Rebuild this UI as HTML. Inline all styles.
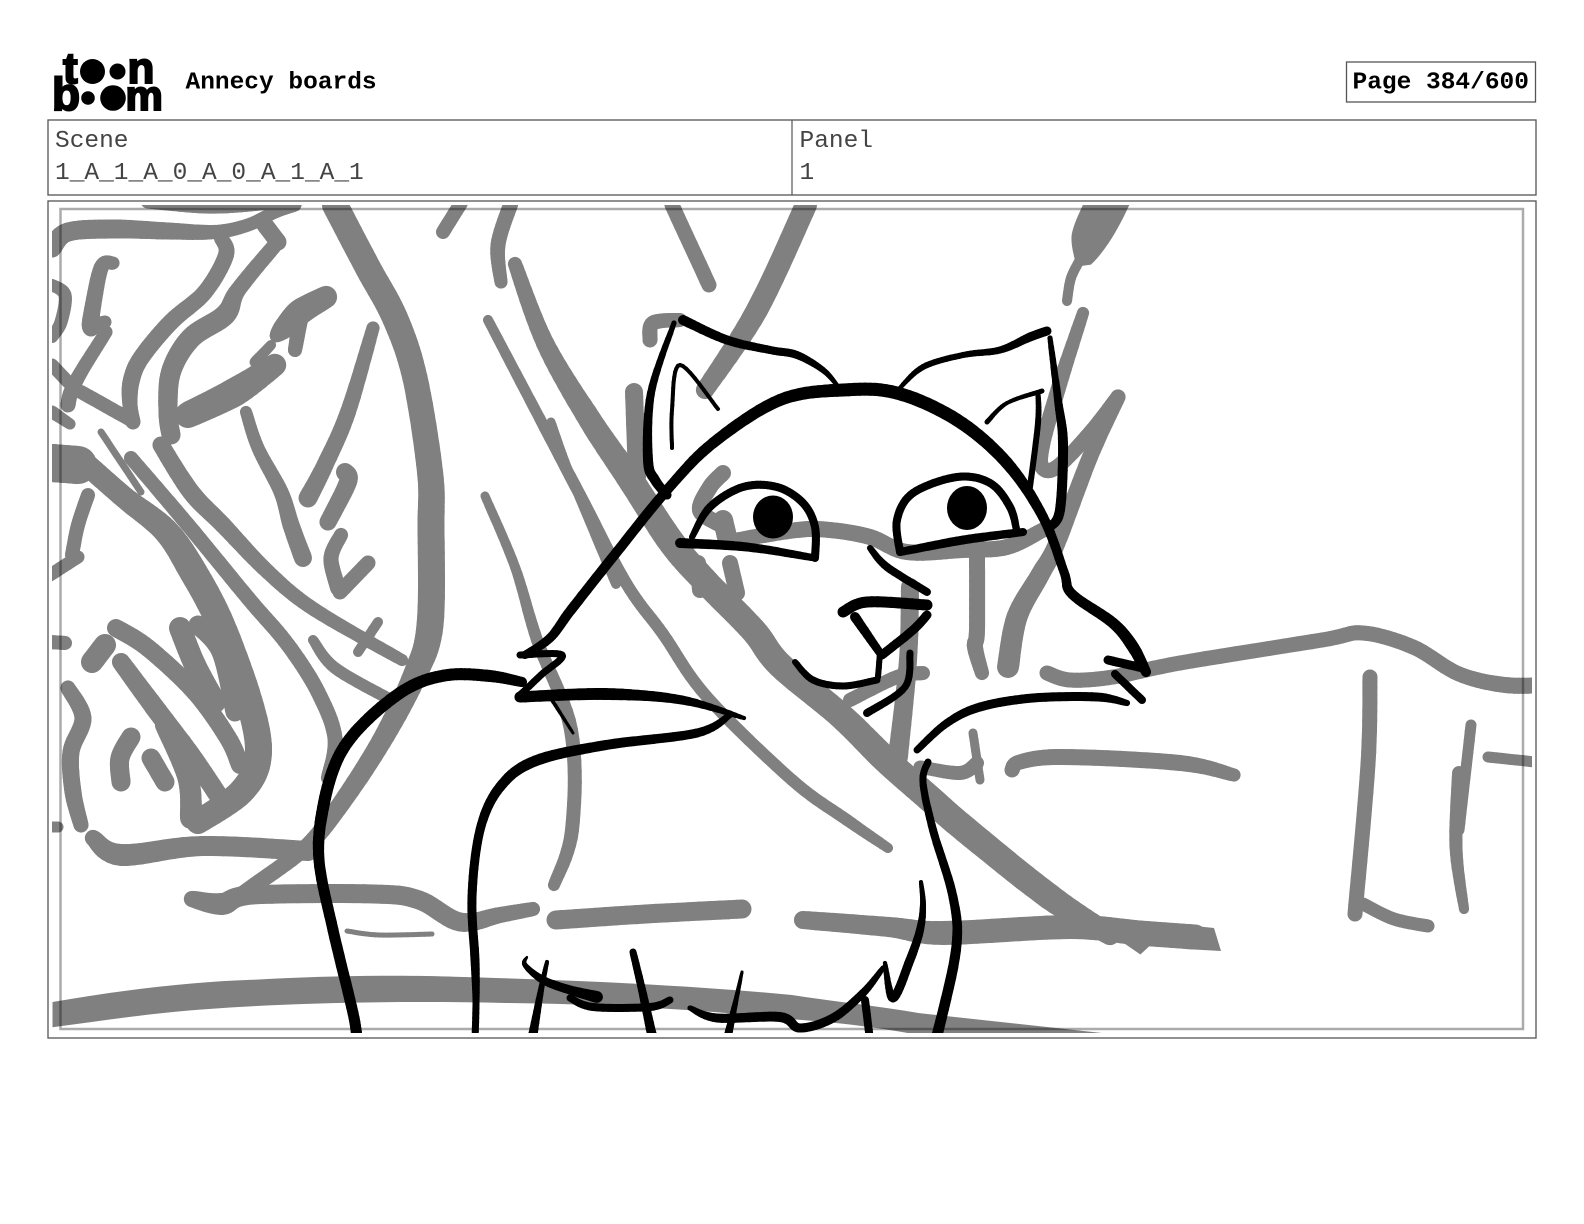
<!DOCTYPE html>
<html><head><meta charset="utf-8"><title>Annecy boards</title>
<style>
html,body{margin:0;padding:0;background:#fff;width:1584px;height:1224px;overflow:hidden}
svg{position:absolute;left:0;top:0;display:block}
text{font-family:"Liberation Mono",monospace;font-size:24.5px;fill:#444}
.b{font-weight:bold;fill:#000}
.l{font-family:"Liberation Sans",sans-serif;font-weight:bold;fill:#000;stroke:#000;stroke-width:2}
</style></head><body>
<svg id="s" width="1584" height="1224" viewBox="0 0 1584 1224" xmlns="http://www.w3.org/2000/svg">
<defs><clipPath id="c"><rect x="52" y="205" width="1480" height="828"/></clipPath></defs>
<rect width="1584" height="1224" fill="#fff"/>
<g>
<text class="l" x="63" y="83" style="font-size:44px">t</text>
<circle cx="92.500" cy="71.500" r="12.500"/><circle cx="117.500" cy="71.500" r="8"/>
<text class="l" x="127.500" y="83" style="font-size:44px">n</text>
<text class="l" x="52" y="110" style="font-size:46px">b</text>
<circle cx="88" cy="98" r="6.800"/><circle cx="113" cy="98" r="12.800"/>
<text class="l" x="125.500" y="110" style="font-size:42px">m</text>
</g>
<text class="b" x="185.500" y="88.500">Annecy boards</text>
<rect x="1346.500" y="62" width="189" height="40" fill="none" stroke="#555" stroke-width="1.300"/>
<text class="b" x="1352.500" y="88.500">Page 384/600</text>
<rect x="48" y="120" width="1488" height="75" fill="none" stroke="#555" stroke-width="1.300"/>
<line x1="792" y1="120" x2="792" y2="195" stroke="#555" stroke-width="1.200"/>
<text x="55" y="147">Scene</text>
<text x="55" y="179">1_A_1_A_0_A_0_A_1_A_1</text>
<text x="799.500" y="147">Panel</text>
<text x="799.500" y="179">1</text>
<rect x="48" y="201" width="1488" height="837" fill="none" stroke="#555" stroke-width="1.300"/>
<g clip-path="url(#c)"><g id="art">
<path fill="#808080" d="M1185 925L1214 928L1221 951L1185 949Z"/>
<g transform="scale(1.0101)">
<path fill="#808080" d="M52 992C120 980 190 972 250 970C320 966 400 965 450 967C560 970 680 975 784 985C830 992 870 996 910 1003L1140 1028L925 1028C880 1018 830 1012 784 1009C700 1000 600 994 500 993C380 990 250 994 170 1002C130 1006 90 1012 52 1017Z"/>
<path fill="#808080" d="M1072 203L1118 203C1108 225 1095 248 1080 262L1066 264C1062 250 1060 240 1061 232C1063 222 1068 212 1072 203Z"/>
<path fill="#808080" d="M1100 925L1129 945L1145 930Z"/>
</g>
</g></g>
<rect x="60.500" y="209" width="1462.500" height="820" fill="none" stroke="#000" stroke-opacity=".33" stroke-width="2.500"/>
</svg>
<script>
/* each stroke: list of [x,y,width] in page pixels */
var gray=[
[[148,201,15],[205,206,15],[250,204,15],[300,198,15]],
[[52,248,19],[68,232,19],[115,229,19],[168,231,17],[215,232,14],[248,225,13],[275,212,13],[295,205,13]],
[[221,238,14],[226,255,16],[205,292,16],[171,322,17],[141,358,17],[131,382,17],[130,405,15],[133,422,15]],
[[265,225,17],[278,242,17]],
[[275,245,15],[238,290,16],[225,315,21],[191,338,21],[171,372,20],[168,412,19],[171,435,19]],
[[113,263,13],[101,268,15],[91,318,17],[91,328,17]],
[[105,322,13],[92,325,13]],
[[106,332,13],[81,372,14],[71,392,15],[68,405,15]],
[[81,392,14],[131,420,14]],
[[52,285,12],[65,295,13],[61,322,13],[52,337,12]],
[[52,365,13],[68,382,13]],
[[52,412,13],[70,424,11]],
[[326,297,22],[300,312,26],[284,328,21],[276,336,12]],
[[300,320,16],[295,350,14]],
[[275,365,22],[235,392,29],[188,415,26]],
[[271,345,10],[255,362,11]],
[[246,412,12],[258,448,13],[281,492,15],[291,525,17],[303,558,18]],
[[335,205,26],[368,268,26],[395,318,26],[415,378,25],[430,472,26],[431,525,27],[430,625,27],[415,675,24],[381,742,20],[338,808,18],[306,847,16],[255,885,16],[234,900,16]],
[[373,328,13],[348,412,16],[325,465,17],[308,498,19]],
[[345,472,18],[348,482,18],[328,522,17]],
[[341,535,14],[331,558,15],[338,588,16]],
[[368,563,15],[340,592,15]],
[[161,445,17],[191,492,18],[223,525,17],[268,572,15],[315,610,14],[402,660,12]],
[[378,622,10],[358,652,10]],
[[101,432,7],[141,492,7]],
[[131,458,14],[188,525,15],[248,598,15],[288,645,15],[318,692,15],[335,738,15],[328,778,14]],
[[52,463,38],[78,465,38]],
[[85,463,22],[125,498,22],[165,530,25],[191,568,28],[221,625,28],[251,708,27],[258,758,27],[241,792,26],[198,822,24]],
[[116,628,18],[148,648,18],[195,692,18],[228,738,18],[240,765,18]],
[[121,662,18],[158,712,20],[191,755,19],[218,795,19]],
[[105,645,22],[92,662,22]],
[[180,628,22],[195,665,22],[215,702,22]],
[[198,625,19],[221,652,19],[235,712,19]],
[[165,725,20],[188,778,21],[191,818,22]],
[[131,737,19],[120,758,19],[121,782,19]],
[[151,758,19],[165,782,19]],
[[68,688,15],[83,718,17],[71,752,17],[73,792,17],[81,825,15]],
[[50,642,14],[65,643,14]],
[[50,827,11],[58,827,11]],
[[313,640,10],[335,668,12],[391,700,12]],
[[88,495,14],[78,525,14],[72,555,14]],
[[78,557,13],[50,575,13]],
[[93,838,16],[121,855,22],[202,846,20],[308,851,20]],
[[192,899,16],[222,904,22],[252,895,19],[374,894,19],[419,900,19],[460,922,19],[500,915,16],[533,909,14]],
[[347,931,5],[379,935,5],[432,934,5]],
[[556,920,19],[646,914,19],[742,909,19]],
[[485,496,9],[515,567,10],[537,640,12],[571,730,14],[572,830,14],[554,885,12]],
[[551,422,9],[571,477,9],[616,584,10]],
[[672,205,15],[709,285,15]],
[[511,203,15],[498,245,15],[501,282,13]],
[[461,203,14],[443,232,14]],
[[488,320,10],[530,400,11],[580,495,12],[626,583,12],[663,634,12],[707,697,12],[792,780,12],[847,820,12],[888,848,10]],
[[515,264,14],[545,343,18],[590,420,23],[632,482,26],[672,543,27],[707,583,26],[753,630,26],[780,665,26],[840,715,26],[885,759,27],[928,797,27],[966,830,27],[1050,897,26],[1110,935,20]],
[[634,392,18],[637,477,18]],
[[650,340,15],[653,323,15],[680,320,14]],
[[806,205,22],[757,310,22],[705,390,18]],
[[723,473,16],[710,487,16],[700,510,16],[717,523,16]],
[[723,520,20],[727,537,20]],
[[730,563,16],[737,593,16]],
[[700,590,16],[698,563,16]],
[[737,540,15],[797,530,16],[830,530,16],[870,537,16],[907,552,16],[963,550,16],[1007,547,16],[1043,530,15]],
[[977,553,16],[977,630,16],[975,647,16],[982,673,14]],
[[910,587,18],[908,660,18],[898,757,20]],
[[1083,313,12],[1060,383,15],[1043,443,15],[1042,467,15],[1057,467,15],[1090,433,15],[1118,397,15]],
[[1118,397,15],[1090,457,16],[1057,543,17],[1040,575,19],[1017,617,21],[1008,667,22]],
[[1081,258,10],[1071,278,10],[1067,301,10]],
[[923,673,14],[897,677,14],[850,700,14]],
[[1047,673,15],[1070,680,15],[1113,677,15],[1180,663,15],[1322,640,15],[1363,633,15],[1413,647,15],[1459,674,15],[1505,685,16],[1545,685,16]],
[[973,733,9],[980,780,9]],
[[920,767,13],[960,773,14],[977,763,14]],
[[1012,770,15],[1020,762,15],[1063,757,16],[1180,763,16],[1234,775,13]],
[[803,920,18],[889,927,20],[943,933,24],[1070,927,24],[1140,933,25],[1195,937,25]],
[[1370,677,15],[1368,764,15],[1355,914,15]],
[[1363,904,13],[1394,919,13],[1428,926,13]],
[[1471,725,11],[1459,830,11]],
[[1459,773,14],[1456,847,13],[1464,909,10]],
[[1488,757,11],[1545,763,11]]
];
var black=[
[[525,655,8],[550,638,9],[571,610,10],[616,553,10],[667,490,10],[713,443,11],[780,400,12],[843,390,13],[897,393,13],[957,420,13],[1007,463,12],[1043,517,10],[1064,572,9],[1072,594,10],[1113,623,11],[1133,647,12],[1146,672,10]],
[[520,655,7],[562,655,7],[541,675,7],[520,695,7]],
[[520,697,11],[606,694,12],[682,700,9],[744,718,4]],
[[730,715,6],[697,733,9],[606,745,10],[535,761,11],[500,787,10],[480,830,9],[472,897,9],[475,960,9],[476,1000,7],[475,1040,7]],
[[552,700,4],[573,733,3]],
[[683,320,10],[727,340,9],[770,350,8],[797,355,8],[823,370,6],[837,385,4]],
[[674,323,5],[651,393,8],[648,460,10],[655,480,10],[667,495,9]],
[[672,448,4],[672,410,4],[680,365,4],[718,409,4]],
[[1108,660,9],[1143,668,9]],
[[1115,674,8],[1142,700,8]],
[[917,750,7],[947,723,8],[980,707,9],[1033,698,9],[1097,697,9],[1127,703,6]],
[[843,612,11],[867,602,11],[927,605,11]],
[[927,615,9],[913,630,9],[882,655,9]],
[[855,617,10],[880,653,8]],
[[880,653,6],[878,677,6]],
[[795,662,6],[813,680,7],[843,686,7],[877,680,7]],
[[910,653,7],[905,687,7],[867,713,8]],
[[870,548,6],[887,567,8],[927,592,8]],
[[692,537,6],[710,507,8],[743,487,8],[777,487,8],[803,503,8],[815,527,8],[815,558,8]],
[[680,543,10],[747,547,9],[815,558,7]],
[[900,552,8],[897,520,8],[913,493,8],[957,477,8],[990,483,8],[1010,507,8],[1017,532,7]],
[[900,552,8],[963,540,9],[1023,532,8]],
[[898,390,4],[923,367,6],[963,355,6],[1000,350,7],[1030,337,9],[1047,331,9]],
[[1050,338,5],[1058,400,8],[1063,443,10],[1060,510,10],[1050,527,9]],
[[987,422,5],[1007,403,4],[1042,391,5]],
[[1038,393,5],[1038,423,6],[1030,487,6]],
[[522,682,10],[490,676,12],[448,675,12],[408,688,12],[365,722,12],[338,758,12],[323,808,12],[319,860,11],[333,930,11],[353,1013,11],[357,1040,11]],
[[527,957,2],[525,965,5],[543,980,8],[570,990,9],[597,997,12]],
[[570,998,7],[593,1007,8],[650,1007,8],[670,1000,7]],
[[690,1008,5],[717,1018,9],[780,1017,10],[800,1028,9],[833,1018,9],[863,993,8],[883,968,5]],
[[885,963,4],[893,998,9],[910,960,9],[920,930,8],[923,905,6],[921,882,4]],
[[547,962,4],[541,990,6],[532,1040,10]],
[[633,952,7],[642,990,8],[653,1040,10]],
[[742,972,3],[736,1000,5],[727,1040,9]],
[[865,1000,8],[870,1040,8]],
[[928,762,7],[923,782,7],[933,830,8],[953,897,9],[956,950,10],[936,1040,11]]
];
var art=document.getElementById('art'),NS='http://www.w3.org/2000/svg';
function bz(a,b,c,d,t){var m=1-t;return m*m*m*a+3*m*m*t*b+3*m*t*t*c+t*t*t*d}
function draw(list,col){
 list.forEach(function(p){
  var pts=[];
  for(var i=0;i<p.length-1;i++){
   var a=p[i-1]||p[i],b=p[i],c=p[i+1],e=p[i+2]||c;
   var b1x=b[0]+(c[0]-a[0])/6,b1y=b[1]+(c[1]-a[1])/6,c1x=c[0]-(e[0]-b[0])/6,c1y=c[1]-(e[1]-b[1])/6;
   for(var k=0;k<10;k++){var t=k/10;pts.push([bz(b[0],b1x,c1x,c[0],t),bz(b[1],b1y,c1y,c[1],t),b[2]+(c[2]-b[2])*t])}
  }
  var l=p[p.length-1];pts.push([l[0],l[1],l[2]]);
  for(var j=0;j<pts.length-1;j++){
   var el=document.createElementNS(NS,'path');
   el.setAttribute('d','M'+pts[j][0].toFixed(1)+' '+pts[j][1].toFixed(1)+'L'+pts[j+1][0].toFixed(1)+' '+pts[j+1][1].toFixed(1));
   el.setAttribute('fill','none');el.setAttribute('stroke',col);
   el.setAttribute('stroke-width',((pts[j][2]+pts[j+1][2])/2).toFixed(1));el.setAttribute('stroke-linecap','round');
   art.appendChild(el);
  }
 });
}
draw(gray,'#808080');draw(black,'#000');
[[773,517,20,21.500],[967,508,20,22]].forEach(function(e){
 var c=document.createElementNS(NS,'ellipse');
 c.setAttribute('cx',e[0]);c.setAttribute('cy',e[1]);c.setAttribute('rx',e[2]);c.setAttribute('ry',e[3]);
 art.appendChild(c);
});
</script>
</body></html>
